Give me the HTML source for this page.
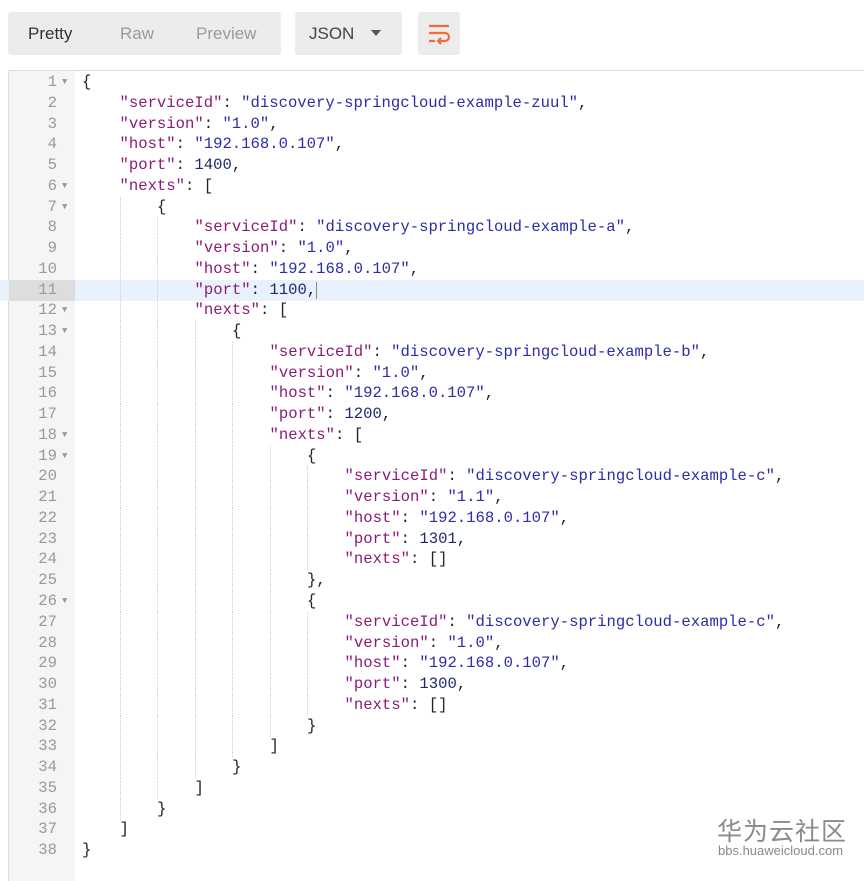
<!DOCTYPE html>
<html><head><meta charset="utf-8"><style>
body{margin:0;width:864px;height:874px;background:#fff;position:relative;overflow:hidden;font-family:"Liberation Sans",sans-serif}
.grp{position:absolute;top:12px;height:43px;background:#ececec;border-radius:3px}
.b{position:absolute;top:24px;font-size:17px;color:#9a9a9a}
.ed{position:absolute;left:8px;top:70px;width:870px;height:810px;border:1px solid #ddd;border-right:none;border-bottom:none}
.gut{position:absolute;left:9px;top:71px;width:66px;height:810px;background:#f5f5f5}
.ln{position:absolute;left:0;width:864px;height:21px;font-family:"Liberation Mono",monospace;font-size:15.6px;line-height:21px;white-space:pre}
.n{position:absolute;left:10px;width:47px;text-align:right;color:#999}
.f{position:absolute;left:62px;color:#999;font-size:9px}
.t{position:absolute;left:82px;color:#222}
.g{position:absolute;top:0;height:21px;border-left:1px dotted #ccc}
.k{color:#8a1b76}.s{color:#2c2ca8}.m{color:#1c2a6a}
</style></head><body>
<div class="grp" style="left:8px;width:273px"></div>
<div class="b" style="left:28px;color:#333">Pretty</div>
<div class="b" style="left:120px">Raw</div>
<div class="b" style="left:196px">Preview</div>
<div class="grp" style="left:295px;width:107px"></div>
<div class="b" style="left:309px;color:#444">JSON</div>
<div style="position:absolute;left:371px;top:30px;width:0;height:0;border-left:5px solid transparent;border-right:5px solid transparent;border-top:6px solid #555"></div>
<div class="grp" style="left:418px;width:42px"></div>
<svg style="position:absolute;left:426px;top:21px" width="26" height="26" viewBox="0 0 26 26" fill="none" stroke="#f26b3a" stroke-width="2.2"><path d="M3 5h20M3 12h16a4 4 0 0 1 0 8h-6M15 17l-3 3 3 3M3 20h6"/></svg>
<div class="ed"></div><div class="gut"></div>
<div id="c"></div>
<div style="position:absolute;left:717px;top:812px;font-family:'Noto Sans CJK SC',sans-serif;font-size:25px;color:#8a8a8a;letter-spacing:1px">华为云社区</div>
<div style="position:absolute;left:718px;top:843px;font-size:13px;color:#8a8a8a">bbs.huaweicloud.com</div>
<script>
var L=[[0,'{',1],[1,'"serviceId": "discovery-springcloud-example-zuul",'],[1,'"version": "1.0",'],[1,'"host": "192.168.0.107",'],[1,'"port": 1400,'],[1,'"nexts": [',1],[2,'{',1],[3,'"serviceId": "discovery-springcloud-example-a",'],[3,'"version": "1.0",'],[3,'"host": "192.168.0.107",'],[3,'"port": 1100,'],[3,'"nexts": [',1],[4,'{',1],[5,'"serviceId": "discovery-springcloud-example-b",'],[5,'"version": "1.0",'],[5,'"host": "192.168.0.107",'],[5,'"port": 1200,'],[5,'"nexts": [',1],[6,'{',1],[7,'"serviceId": "discovery-springcloud-example-c",'],[7,'"version": "1.1",'],[7,'"host": "192.168.0.107",'],[7,'"port": 1301,'],[7,'"nexts": []'],[6,'},'],[6,'{',1],[7,'"serviceId": "discovery-springcloud-example-c",'],[7,'"version": "1.0",'],[7,'"host": "192.168.0.107",'],[7,'"port": 1300,'],[7,'"nexts": []'],[6,'}'],[5,']'],[4,'}'],[3,']'],[2,'}'],[1,']'],[0,'}']];
var h='';
L.forEach(function(l,i){var top=72+i*20.76;var d=l[0],t=l[1];
var x=t.replace(/^("[^"]*")(:\s*)("[^"]*")?(\d+)?/,function(a,k,c,s,n){return '<span class="k">'+k+'</span>'+c+(s?'<span class="s">'+s+'</span>':'')+(n?'<span class="m">'+n+'</span>':'');});
var bg=i==10?'background:#e8f1fc;':'';
h+='<div class="ln" style="top:'+top+'px;'+bg+'">';
if(i==10)h+='<div style="position:absolute;left:9px;width:66px;height:21px;background:#ddd"></div><div style="position:absolute;left:'+(82+37.5*3+13*9.37)+'px;top:2px;height:17px;border-left:1px solid #888"></div>';
for(var k=1;k<d;k++)h+='<div class="g" style="left:'+(82+k*37.5)+'px"></div>';
h+='<span class="n">'+(i+1)+'</span>'+(l[2]?'<span class="f">▼</span>':'')+'<span class="t" style="left:'+(82+d*37.5)+'px">'+x+'</span></div>';});
document.getElementById('c').innerHTML=h;
</script>
</body></html>
